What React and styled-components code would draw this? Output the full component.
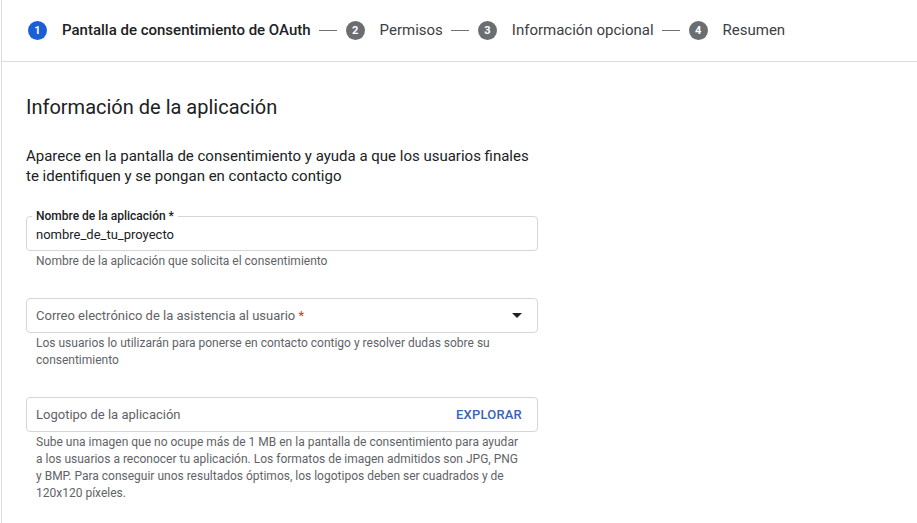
import React from "react";
import styled, { createGlobalStyle } from "styled-components";

const Global = createGlobalStyle`
  html, body { margin: 0; padding: 0; background: #fff; }
  body { font-family: Roboto, "Noto Sans", Arial, sans-serif; color: #202124; }
  * { box-sizing: border-box; }
`;

const Page = styled.div`
  margin-left: 1px;
  border-left: 1px solid #dadce0;
  min-height: 523px;
`;

const Stepper = styled.div`
  display: flex;
  align-items: center;
  height: 62px;
  padding: 0 0 1px 26px;
  border-bottom: 1px solid #dadce0;
`;

const Step = styled.div`
  display: flex;
  align-items: center;
  gap: 15px;
`;

const Circle = styled.span`
  width: 19px;
  height: 19px;
  border-radius: 50%;
  background: ${(p) => (p.$active ? "#1a5fd6" : "#6b6e70")};
  color: #fff;
  font-size: 11px;
  font-weight: 700;
  display: flex;
  align-items: center;
  justify-content: center;
`;

const StepLabel = styled.span`
  font-size: 15px;
  font-weight: ${(p) => (p.$active ? 500 : 400)};
  color: ${(p) => (p.$active ? "#202124" : "#3c4043")};
`;

const Dash = styled.span`
  width: 18px;
  height: 1px;
  background: #6f7275;
  margin: 0 9px 0 8px;
`;

const Main = styled.div`
  padding: 31px 24px 0;
  width: 560px;
`;

const Title = styled.h2`
  margin: 0;
  font-size: 20px;
  line-height: 28px;
  font-weight: 400;
  color: #202124;
`;

const Intro = styled.p`
  margin: 25px 0 30px;
  font-size: 15px;
  line-height: 20px;
  color: #202124;
`;

const Field = styled.div`
  display: flex;
  flex-direction: column;
  & + & {
    margin-top: 28px;
  }
`;

const Box = styled.div`
  position: relative;
  height: 35px;
  border: 1px solid #d4d6d9;
  border-radius: 4px;
  display: flex;
  align-items: center;
  padding: 0 15px 0 9px;
  font-size: 13px;
  color: ${(p) => (p.$filled ? "#202124" : "#5f6368")};
`;

const FloatLabel = styled.span`
  position: absolute;
  top: -8px;
  left: 5px;
  padding: 0 4px;
  background: #fff;
  font-size: 12px;
  line-height: 14px;
  font-weight: 500;
  color: #202124;
`;

const BoxText = styled.span`
  flex: 1;
  padding-top: ${(p) => (p.$filled ? "1px" : "0")};
`;

const Req = styled.span`
  color: #d93025;
`;

const Caret = styled.span`
  width: 0;
  height: 0;
  border-left: 5px solid transparent;
  border-right: 5px solid transparent;
  border-top: 5px solid #202124;
`;

const Browse = styled.span`
  color: #3b64b5;
  font-size: 13px;
  font-weight: 500;
  letter-spacing: 0.2px;
`;

const Helper = styled.div`
  margin-top: 2px;
  padding: 0 13px 0 10px;
  font-size: 12px;
  line-height: 17px;
  color: #5f6368;
`;

const steps = [
  "Pantalla de consentimiento de OAuth",
  "Permisos",
  "Información opcional",
  "Resumen",
];

export default function App() {
  return (
    <Page>
      <Global />
      <Stepper>
        {steps.map((s, i) => (
          <React.Fragment key={s}>
            {i > 0 && <Dash />}
            <Step>
              <Circle $active={i === 0}>{i + 1}</Circle>
              <StepLabel $active={i === 0}>{s}</StepLabel>
            </Step>
          </React.Fragment>
        ))}
      </Stepper>
      <Main>
        <Title>Información de la aplicación</Title>
        <Intro>
          Aparece en la pantalla de consentimiento y ayuda a que los usuarios
          finales te identifiquen y se pongan en contacto contigo
        </Intro>
        <Field>
          <Box $filled>
            <FloatLabel>Nombre de la aplicación *</FloatLabel>
            <BoxText $filled>nombre_de_tu_proyecto</BoxText>
          </Box>
          <Helper>Nombre de la aplicación que solicita el consentimiento</Helper>
        </Field>
        <Field>
          <Box>
            <BoxText>
              Correo electrónico de la asistencia al usuario <Req>*</Req>
            </BoxText>
            <Caret />
          </Box>
          <Helper>
            Los usuarios lo utilizarán para ponerse en contacto contigo y
            resolver dudas sobre su consentimiento
          </Helper>
        </Field>
        <Field>
          <Box>
            <BoxText>Logotipo de la aplicación</BoxText>
            <Browse>EXPLORAR</Browse>
          </Box>
          <Helper>
            Sube una imagen que no ocupe más de 1 MB en la pantalla de
            consentimiento para ayudar a los usuarios a reconocer tu aplicación.
            Los formatos de imagen admitidos son JPG, PNG y BMP. Para conseguir
            unos resultados óptimos, los logotipos deben ser cuadrados y de
            120x120 píxeles.
          </Helper>
        </Field>
      </Main>
    </Page>
  );
}
